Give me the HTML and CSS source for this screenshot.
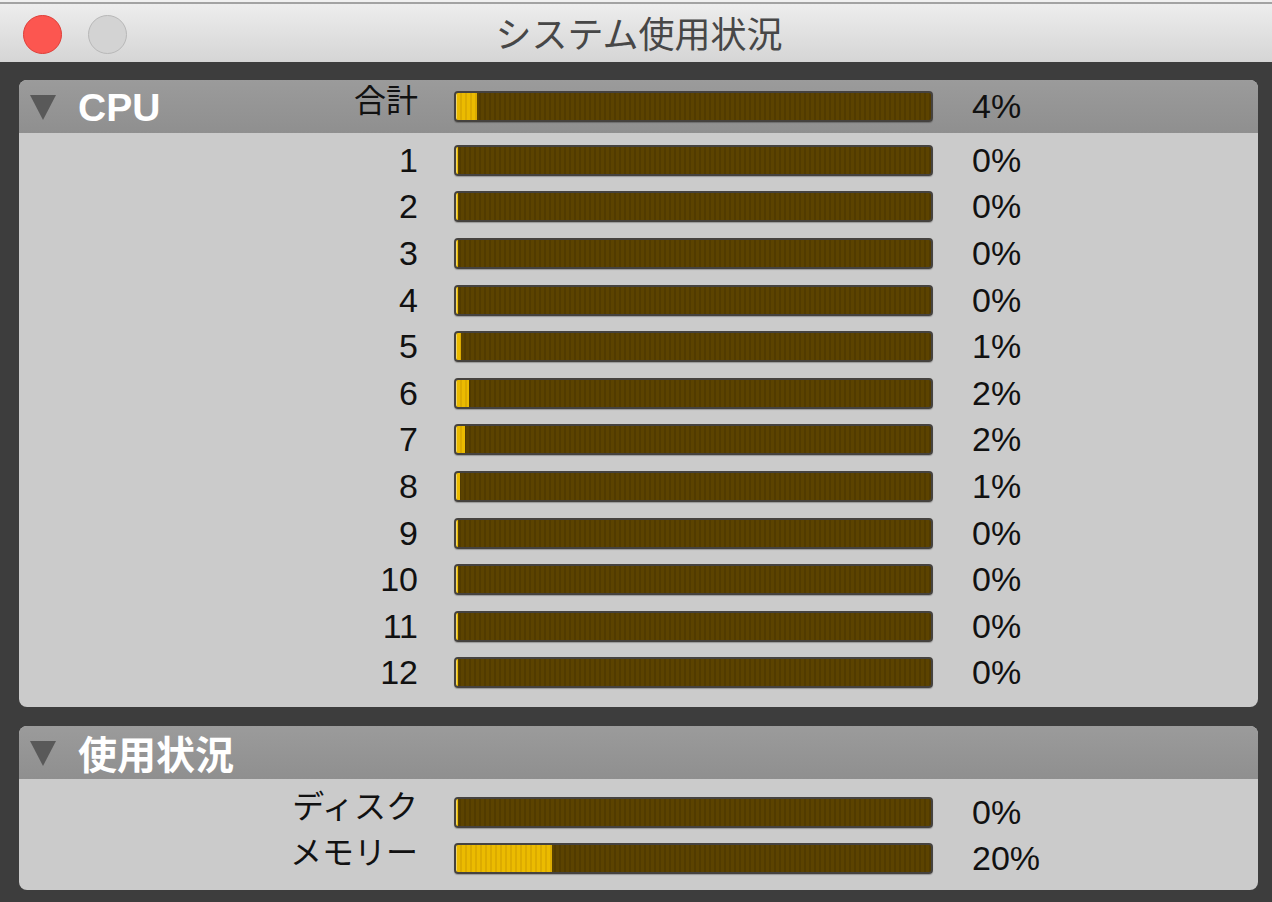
FILE: index.html
```html
<!DOCTYPE html>
<html lang="ja">
<head>
  <meta charset="UTF-8">
  <meta name="viewport" content="width=device-width, initial-scale=1.0">
  <title>システム使用状況</title>
  <link rel="stylesheet" href="styles.css">
</head>
<body>
  <div class="window">
    <div class="titlebar">
      <span class="light close"></span>
      <span class="light idle"></span>
      <div class="title">システム使用状況</div>
    </div>

    <div class="content">
      <div class="panel">
        <div class="panel-head row">
          <div class="label-col">
            <span class="toggle"></span>
            <span class="panel-title">CPU</span>
            <span class="label jp">合計</span>
          </div>
          <div class="bar"><div class="fill" style="width: 4.4%"></div></div>
          <span class="pct">4%</span>
        </div>
        <div class="panel-body">
          <div class="row"><div class="label-col"><span class="label">1</span></div><div class="bar"><div class="fill" style="width: 0.4%"></div></div><span class="pct">0%</span></div>
          <div class="row"><div class="label-col"><span class="label">2</span></div><div class="bar"><div class="fill" style="width: 0.4%"></div></div><span class="pct">0%</span></div>
          <div class="row"><div class="label-col"><span class="label">3</span></div><div class="bar"><div class="fill" style="width: 0.4%"></div></div><span class="pct">0%</span></div>
          <div class="row"><div class="label-col"><span class="label">4</span></div><div class="bar"><div class="fill" style="width: 0.4%"></div></div><span class="pct">0%</span></div>
          <div class="row"><div class="label-col"><span class="label">5</span></div><div class="bar"><div class="fill" style="width: 1%"></div></div><span class="pct">1%</span></div>
          <div class="row"><div class="label-col"><span class="label">6</span></div><div class="bar"><div class="fill" style="width: 2.7%"></div></div><span class="pct">2%</span></div>
          <div class="row"><div class="label-col"><span class="label">7</span></div><div class="bar"><div class="fill" style="width: 1.9%"></div></div><span class="pct">2%</span></div>
          <div class="row"><div class="label-col"><span class="label">8</span></div><div class="bar"><div class="fill" style="width: 0.8%"></div></div><span class="pct">1%</span></div>
          <div class="row"><div class="label-col"><span class="label">9</span></div><div class="bar"><div class="fill" style="width: 0.4%"></div></div><span class="pct">0%</span></div>
          <div class="row"><div class="label-col"><span class="label">10</span></div><div class="bar"><div class="fill" style="width: 0.4%"></div></div><span class="pct">0%</span></div>
          <div class="row"><div class="label-col"><span class="label">11</span></div><div class="bar"><div class="fill" style="width: 0.4%"></div></div><span class="pct">0%</span></div>
          <div class="row"><div class="label-col"><span class="label">12</span></div><div class="bar"><div class="fill" style="width: 0.4%"></div></div><span class="pct">0%</span></div>
        </div>
      </div>

      <div class="panel">
        <div class="panel-head">
          <span class="toggle"></span>
          <span class="panel-title jp">使用状況</span>
        </div>
        <div class="panel-body small">
          <div class="row"><div class="label-col"><span class="label jp">ディスク</span></div><div class="bar"><div class="fill" style="width: 0.4%"></div></div><span class="pct">0%</span></div>
          <div class="row"><div class="label-col"><span class="label jp">メモリー</span></div><div class="bar"><div class="fill" style="width: 20.2%"></div></div><span class="pct">20%</span></div>
        </div>
      </div>
    </div>
  </div>
</body>
</html>
```

FILE: styles.css
```css
body {
  margin: 0;
  background: #3d3d3d;
  font-family: "Liberation Sans", "Noto Sans CJK JP", sans-serif;
  color: #111;
}
.window {
  min-height: 902px;
  border-top: 2px solid #f0f0f0;
  box-sizing: border-box;
}
.titlebar {
  position: relative;
  height: 58px;
  border-top: 2px solid #a2a2a2;
  background: linear-gradient(#ededed, #d5d5d5);
  display: flex;
  align-items: center;
  justify-content: center;
}
.light {
  position: absolute;
  top: 11px;
  width: 37px;
  height: 37px;
  border-radius: 50%;
}
.close {
  left: 23px;
  background: #fc5650;
  border: 1px solid #df3e38;
}
.idle {
  left: 88px;
  background: #d3d3d3;
  border: 1px solid #b8b8b8;
}
.title {
  font-family: "Noto Sans CJK JP", sans-serif;
  font-size: 36px;
  line-height: 1.2;
  color: #474747;
  margin-left: 6px;
}
.content {
  padding: 18px 14px 0 19px;
  display: flex;
  flex-direction: column;
  gap: 19px;
}
.panel {
  background: #cbcbcb;
  border-radius: 8px;
}
.panel-head {
  height: 53px;
  background: linear-gradient(#9b9b9b, #8f8f8f);
  border-radius: 8px 8px 0 0;
  display: flex;
  align-items: center;
  padding-left: 11px;
  color: #fff;
}
.panel-head.row {
  padding-left: 0;
}
.panel-head.row .label-col {
  padding-left: 11px;
  box-sizing: border-box;
}
.toggle {
  width: 0;
  height: 0;
  border-left: 13px solid transparent;
  border-right: 13px solid transparent;
  border-top: 25px solid #595959;
  margin-right: 22px;
  margin-top: 2px;
}
.panel-title {
  font-size: 39px;
  font-weight: bold;
  line-height: 1.1;
  margin-top: 4px;
}
.panel-title.jp {
  font-family: "Noto Sans CJK JP", sans-serif;
  font-size: 39px;
  line-height: 1.2;
  margin-top: 0;
}
.panel-body {
  padding: 4px 0 11px;
}
.panel-body.small {
  padding: 10px 0 9px;
}
.row {
  display: flex;
  align-items: center;
  height: 46.6px;
}
.panel-body.small .row {
  height: 46px;
}
.panel-head.row {
  height: 53px;
}
.label-col {
  width: 399px;
  display: flex;
  align-items: center;
  justify-content: flex-end;
}
.panel-head .label-col .label {
  margin-left: auto;
}
.label {
  font-size: 34px;
  line-height: 1.15;
  color: #111;
}
.label.jp {
  font-family: "Noto Sans CJK JP", sans-serif;
  font-size: 32px;
  line-height: 1.2;
  margin-bottom: 16px;
}
.bar {
  margin-left: 36px;
  width: 475px;
  height: 27px;
  border: 2px solid #45423f;
  border-radius: 4px;
  background: repeating-linear-gradient(90deg, #5c4300 0 3px, #523b00 3px 5px);
  box-shadow: 0 1px 1px rgba(0,0,0,0.25);
  overflow: hidden;
}
.fill {
  height: 100%;
  min-width: 2px;
  background: repeating-linear-gradient(90deg, #ebbb00 0 3px, #dcab00 3px 5px);
  border-left: 1px solid #f3d766;
  box-sizing: border-box;
}
.pct {
  margin-left: 39px;
  font-size: 34px;
  line-height: 1.15;
  color: #111;
}
```
